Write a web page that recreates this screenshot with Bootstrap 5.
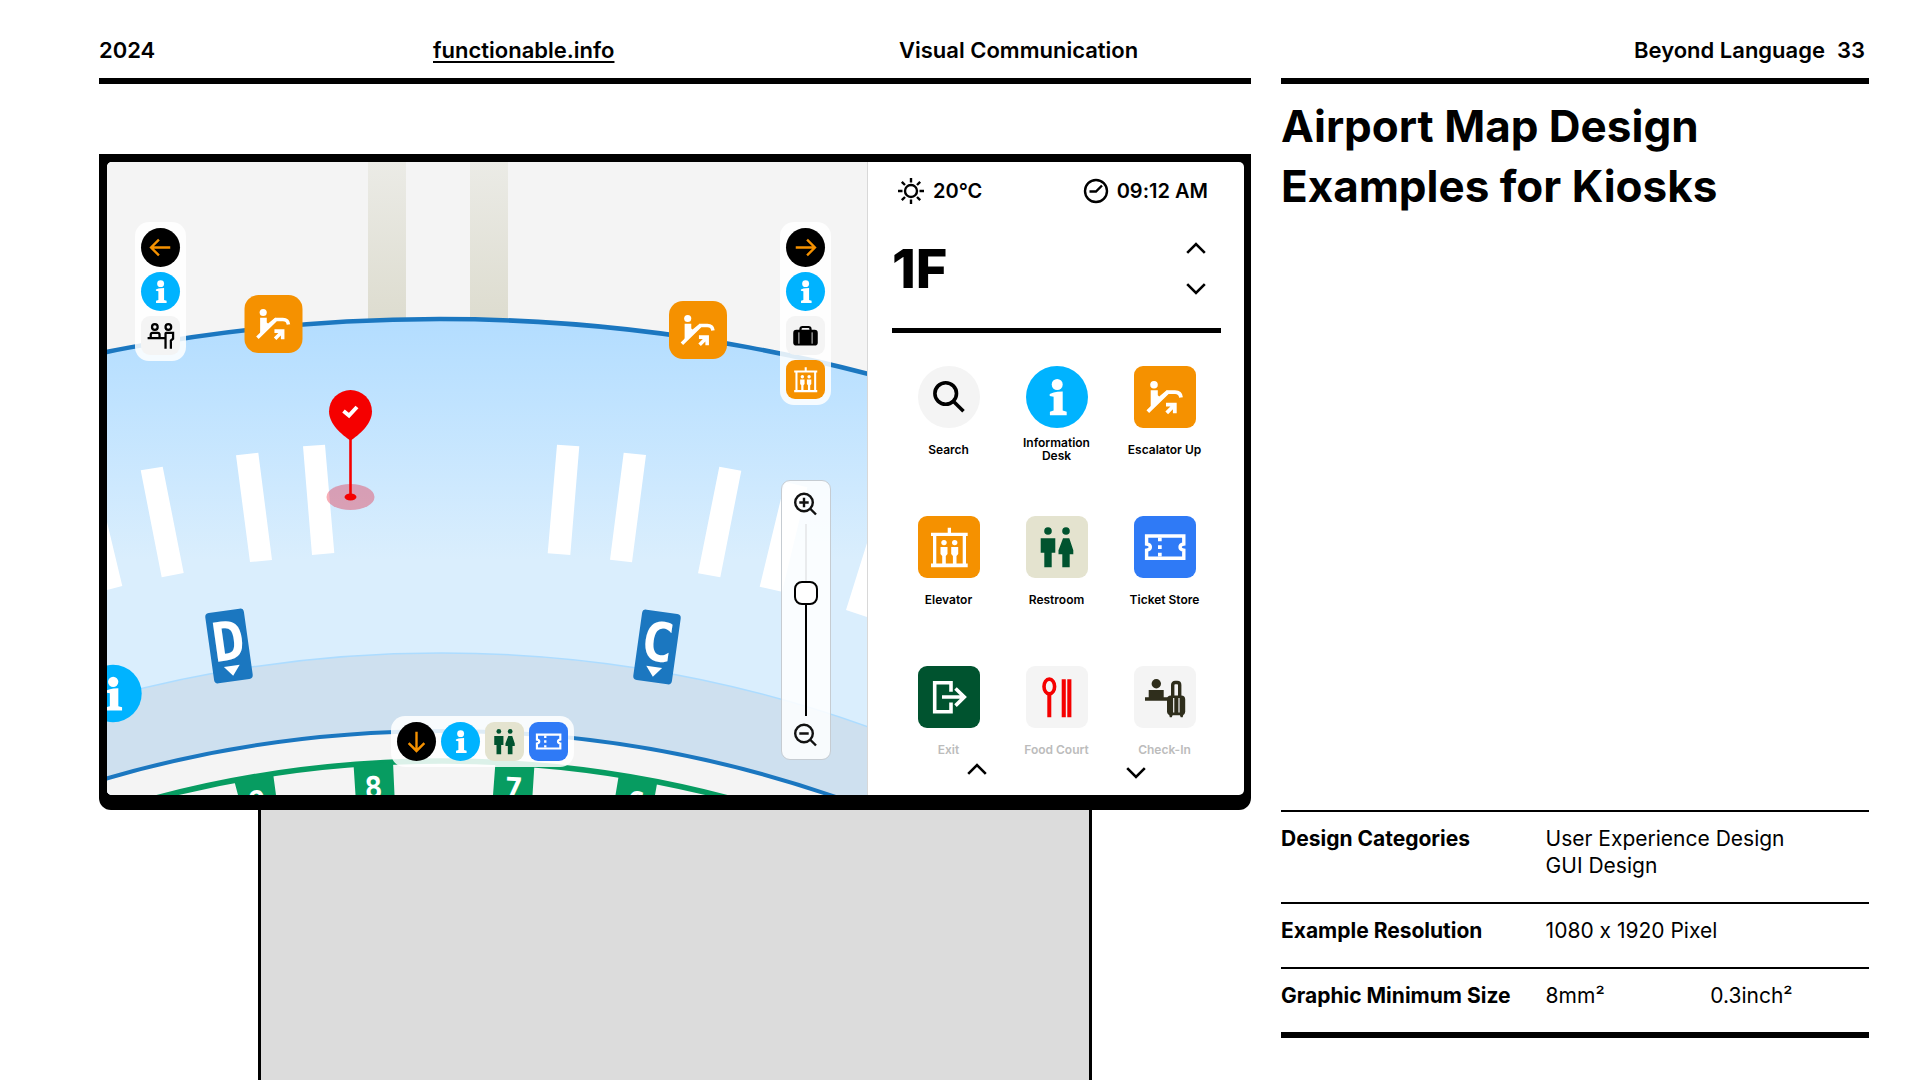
<!DOCTYPE html>
<html lang="en">
<head>
<meta charset="utf-8">
<meta name="viewport" content="width=device-width, initial-scale=1">
<title>Airport Map Design Examples for Kiosks</title>
<link href="https://cdn.jsdelivr.net/npm/bootstrap@5.3.0/dist/css/bootstrap.min.css" rel="stylesheet">
<style>
  body { font-family: Inter, "Noto Sans", sans-serif; font-variant-ligatures: no-contextual; color: #000; background: #fff; }
  .sheet { padding-left: 99px; padding-right: 51px; gap: 30px; }
  .sheet-main { flex: 1152 1 0; min-width: 0; }
  .sheet-side { flex: 588 1 0; min-width: 0; padding-bottom: 42px; }
  .strip { height: 84px; border-bottom: 6px solid #000; padding-top: 22px; font-size: 22px; font-weight: 600; line-height: 28px; }
  .strip-main { display: grid; grid-template-columns: 334fr 466fr 352fr; align-items: center; }
  .strip-side { gap: 12px; padding-right: 4px; }
  .strip a { color: #000; text-underline-offset: 3px; text-decoration-thickness: 2px; text-decoration-skip-ink: none; }
  .headline { font-size: 44px; line-height: 60px; font-weight: 700; margin-top: 12px; }

  .kiosk { margin-top: 70px; background: #000; padding: 8px 7px 15px 8px; border-radius: 0 0 12px 12px; }
  .screen { border-radius: 5px; overflow: hidden; background: #fff; }
  .stand { width: 834px; max-width: 100%; margin-left: 159px; background: #dcdcdc; border: solid #000; border-width: 0 3px; }
  .map-pane { flex: 1 1 0; min-width: 0; border-right: 1px solid #d8d8d8; background: #f4f4f4; }
  .panel { width: 376px; padding: 14px 23px 0 24px; }

  .dock { background: rgba(255,255,255,.86); border-radius: 14px; padding: 6px; gap: 5px; }
  .dock-left { left: 28px; top: 60px; }
  .dock-right { right: 36px; top: 60px; }
  .dock-bottom { left: 284px; bottom: 28px; }
  .zoomer { right: 36px; bottom: 35px; width: 50px; height: 280px; background: rgba(255,255,255,.86); border: 1px solid #c6ccd2; border-radius: 9px; padding: 11px 0 12px; }
  .plain { background: none; border: 0; padding: 0; color: inherit; line-height: 0; }
  .glyph { width: 62px; height: 62px; border-radius: 9px; flex: none; }
  .dock .glyph { width: 39px; height: 39px; border-radius: 9px; }
  .glyph.disc, .dock .glyph.disc { border-radius: 50%; }
  .bg-info-sky { background: #00b3ff; color: #fff; }
  .bg-amber { background: #f59100; color: #fff; }
  .bg-sand { background: #e4e3cf; color: #00532f; }
  .bg-azure { background: #2f7af6; color: #fff; }
  .bg-forest { background: #00532f; color: #fff; }
  .bg-fog { background: #f4f4f4; color: #000; }
  .bg-ink { background: #000; color: #f59100; }
  .ink-red { color: #f50000; }
  .ink-olive { color: #2f2e1c; }

  .track-box { width: 24px; height: 192px; position: relative; }
  .track-box input { position: absolute; left: -84px; top: 84px; width: 192px; height: 24px; margin: 0; transform: rotate(-90deg); appearance: none; -webkit-appearance: none; background: none; }
  .track-box input::-webkit-slider-runnable-track { height: 2px; background: linear-gradient(90deg, #000 64%, #e9ebed 64%); }
  .track-box input::-webkit-slider-thumb { -webkit-appearance: none; width: 24px; height: 24px; margin-top: -11px; border: 2px solid #000; border-radius: 8px; background: #fff; }

  .status { font-size: 20px; font-weight: 600; line-height: 30px; padding: 0 13px 0 5px; }
  .floor { height: 127px; border-bottom: 5px solid #000; padding-top: 3px; }
  .floor-name { font-size: 54px; line-height: 60px; font-weight: 800; }
  .floor-keys { gap: 29px; padding-right: 15px; }
  .places { display: grid; grid-template-columns: repeat(3, 108px); justify-content: center; row-gap: 53px; margin-top: 33px; }
  .place-label { height: 28px; margin-top: 7px; font-size: 12px; line-height: 13px; font-weight: 600; }
  .place-dim { color: #bcbcbc; }
  .pager { height: 32px; padding: 0 75px 0 75px; }

  .facts { width: 100%; font-size: 21px; line-height: 27px; border-bottom: 6px solid #000; table-layout: fixed; }
  .facts th, .facts td { border-top: 2px solid #000; vertical-align: top; padding: 13px 0 23px; }
  .facts th { font-weight: 700; letter-spacing: normal; white-space: nowrap; }
  .col-name { width: 45%; }
  .col-metric { width: 28%; }
</style>
</head>
<body>
<svg class="d-none" aria-hidden="true">
  <symbol id="i-info" viewBox="0 0 62 62"><circle cx="31.2" cy="18.5" r="5.5" fill="currentColor"/><path fill="currentColor" d="M23.7 28l4-1.6q3-.9 9-.9v19l4 1.2v3.6H23.9v-3.6l3.7-1.2V30.8l-3.9-.8z"/></symbol>
  <symbol id="i-esc" viewBox="0 0 62 62"><circle cx="20" cy="18.7" r="3.8" fill="currentColor"/><path fill="currentColor" d="M16.7 24.3h7.1v5l1.4 1.2L33 24l1.500 3-14 14-3.800 2z"/><path fill="none" stroke="currentColor" stroke-width="3.8" d="M13.8 45.6L33.8 26.2H41q5.5 0 6 5.3M32 38.6h8.8v8.6M41 38.5l-8.3 8.3"/></symbol>
  <symbol id="i-lift" viewBox="0 0 62 62"><path fill="currentColor" d="M29.7 11.7H33v5h16.7V20H48v27.5h1.7v3.8H13v-3.8h2V20h-2v-3.3h16.7zM18.3 20v27.5h26.4V20z" fill-rule="evenodd"/><g fill="currentColor"><circle cx="26" cy="26.6" r="2.7"/><circle cx="36.7" cy="26.6" r="2.7"/><path d="M22.5 31h7v7l-1.7 2v8h-3.6v-8l-1.7-2zM33.2 31h7v7l-1.7 2v8h-3.6v-8l-1.7-2z"/></g></symbol>
  <symbol id="i-wc" viewBox="0 0 62 62"><g fill="currentColor"><circle cx="22" cy="15" r="3.8"/><circle cx="40" cy="15" r="3.8"/><path d="M14.7 22.3h14.6v14.4h-3.6v14.6h-7.4V36.7h-3.6zM37 22.3h6.3l4 12v4h-3.6v13h-7.4v-13h-3.8v-4z"/></g></symbol>
  <symbol id="i-ticket" viewBox="0 0 62 62"><path fill="none" stroke="currentColor" stroke-width="3.4" d="M12.6 20h37.2v8c-5 .5-5 5.700 0 6.200v8H12.600v-8c5-.5 5-5.700 0-6.200z"/><path fill="currentColor" d="M24 21.500h3.700v3.800H24zM24 29.200h3.700v3.700H24zM24 36.800h3.700v3.700H24z"/></symbol>
  <symbol id="i-exit" viewBox="0 0 62 62"><path fill="none" stroke="currentColor" stroke-width="3.600" d="M33 25.700V16.700H16.700v29H33v-9.300M24 31h22.500M37.500 22.500L46.300 31l-8.800 8.600"/></symbol>
  <symbol id="i-food" viewBox="0 0 62 62"><ellipse cx="23.300" cy="20.500" rx="5.300" ry="7.400" fill="none" stroke="currentColor" stroke-width="3.600"/><path fill="currentColor" d="M21.300 28h4v23.200h-4zM35.700 13.300h4.100v37.900h-4.100zM41.300 13.300h4.100v37.900h-4.100z"/></symbol>
  <symbol id="i-check" viewBox="0 0 62 62"><g fill="currentColor"><circle cx="22.300" cy="17.700" r="4.700"/><path d="M14.700 24h15v7.300H34v3.500H11v-3.500h3.700z"/><rect x="33" y="29.500" width="18.200" height="19.800" rx="4"/><path d="M35 48h4l-1.200 3.300h-2zM45.500 48h4l-.8 3.300h-2z"/></g><path fill="none" stroke="currentColor" stroke-width="3.400" d="M38.700 31V19q0-2.500 2.500-2.500h2q2.500 0 2.500 2.500v12"/><path stroke="#f4f4f4" stroke-width="1.200" d="M39.700 32v14.500M45 32v14.500"/></symbol>
  <symbol id="i-search" viewBox="0 0 62 62"><g fill="none" stroke="currentColor" stroke-width="3.600"><circle cx="27.700" cy="27.500" r="10.800"/><path d="M35.300 35.200L45.500 45.200"/></g></symbol>
  <symbol id="i-desk" viewBox="0 0 62 62"><g fill="none" stroke="currentColor" stroke-width="3.600"><circle cx="22" cy="17.500" r="4.500"/><circle cx="43.500" cy="17.500" r="4.500"/><path d="M15.500 34v-4q0-3 3-3h8q3 0 3 3v4M10.500 35h28.500M39 52V28q0-1 1-1h11v9l-3.500 3v13"/></g></symbol>
  <symbol id="i-bag" viewBox="0 0 62 62"><rect x="11.500" y="22" width="39" height="25" rx="5" fill="currentColor"/><path fill="none" stroke="currentColor" stroke-width="3.500" d="M23 23v-2q0-3.500 3.500-3.500h9q3.500 0 3.500 3.500v2"/><path stroke="#f4f4f4" stroke-width="1.400" d="M20.500 26v18M41.500 26v18"/></symbol>
  <symbol id="i-arrow" viewBox="0 0 62 62"><path fill="none" stroke="currentColor" stroke-width="3.800" d="M15.500 31h30M33.500 18.500L46 31 33.500 43.500"/></symbol>
  <symbol id="i-arrow-l" viewBox="0 0 62 62"><use href="#i-arrow" transform="rotate(180 31 31)" width="62" height="62"/></symbol>
  <symbol id="i-arrow-d" viewBox="0 0 62 62"><use href="#i-arrow" transform="rotate(90 31 31)" width="62" height="62"/></symbol>
  <symbol id="i-up" viewBox="0 0 20 12"><path fill="none" stroke="currentColor" stroke-width="2.600" d="M1.200 10.800L10 2l8.800 8.800"/></symbol>
  <symbol id="i-down" viewBox="0 0 20 12"><path fill="none" stroke="currentColor" stroke-width="2.600" d="M1.200 1.200L10 10l8.800-8.800"/></symbol>
</svg>

<div class="sheet d-flex min-vh-100">
  <main class="sheet-main d-flex flex-column">
    <header class="strip strip-main">
      <span>2024</span>
      <span><a href="#">functionable.info</a></span>
      <span>Visual Communication</span>
    </header>

    <section class="kiosk">
      <div class="screen d-flex">
        <div class="map-pane position-relative overflow-hidden">
          <svg class="position-absolute top-0 start-0 w-100 h-100" viewBox="107 162 760 633" preserveAspectRatio="xMidYMid slice" role="img" aria-label="Terminal map, first floor">
            <defs>
              <linearGradient id="g-sky" gradientUnits="userSpaceOnUse" x1="0" y1="320" x2="0" y2="560"><stop offset="0" stop-color="#b3ddff"/><stop offset=".35" stop-color="#c0e3ff"/><stop offset="1" stop-color="#daeefd"/></linearGradient>
              <linearGradient id="g-pier" x1="0" y1="0" x2="0" y2="1"><stop offset="0" stop-color="#ebebe6"/><stop offset="1" stop-color="#dddccf"/></linearGradient>
            </defs>
            <rect x="107" y="162" width="760" height="633" fill="#f4f4f4"/>
            <path fill="url(#g-pier)" d="M368 162h38v160h-38zM470 162h38v160h-38z"/>
            <circle cx="439.500" cy="2019" r="1700" fill="url(#g-sky)" stroke="#1b77c0" stroke-width="4.500"/>
            <circle cx="441" cy="1925" r="1272" fill="#cee0ef" stroke="#addcff" stroke-width="1.500"/>
            <path fill="#fff" d="M107 522L122.300 586 107 590zM140.700 470.300L162.700 466.700 183.700 573 161.700 577.300zM236 455.300L258.300 452.700 272 560 250 562zM303 446.300L325 444.700 334.300 553 312 555zM557 444.700L579.300 446.300 570.300 555 547.700 553.300zM623.700 452.700L646 455 632 562.300 610 559.700zM719.300 466.700L741.300 470.700 720.300 577.300 698 573.300zM785 482L807.300 487.300 782 591.700 759.700 586.700zM867 543L846 610 867 617z"/>
            <circle cx="442" cy="1938" r="1207" fill="#f4f4f4" stroke="#1b77c0" stroke-width="4"/>
            <circle cx="442" cy="1882" r="1121" fill="none" stroke="#079c61" stroke-width="5.500"/>
            <path fill="#079c61" d="M234 780L273 773 276 795H238zM353.500 764L393 762 394.500 795H355.500zM495.500 762L534.500 764 532.500 795H493zM619 774L657.500 781 655 795H615.500z"/>
            <g fill="#fff" font-family="'DejaVu Sans Mono', monospace" font-weight="700" font-size="30" text-anchor="middle">
              <text x="259" y="812" transform="rotate(-8 259 812)">9</text>
              <text x="374" y="798" transform="rotate(-3 374 798)">8</text>
              <text x="513" y="799" transform="rotate(3 513 799)">7</text>
              <text x="634" y="813" transform="rotate(8 634 813)">6</text>
            </g>
            <g transform="translate(229 646) rotate(-8)">
              <rect x="-19.500" y="-35.500" width="39" height="71" rx="4" fill="#1b77c0"/>
              <text x="0" y="14" text-anchor="middle" fill="#fff" font-family="'DejaVu Sans Mono', monospace" font-weight="700" font-size="54">D</text>
              <path fill="#fff" d="M-8 20H8L0 30z"/>
            </g>
            <g transform="translate(657 647) rotate(8)">
              <rect x="-19.500" y="-35.500" width="39" height="71" rx="4" fill="#1b77c0"/>
              <text x="0" y="14" text-anchor="middle" fill="#fff" font-family="'DejaVu Sans Mono', monospace" font-weight="700" font-size="54">C</text>
              <path fill="#fff" d="M-8 20H8L0 30z"/>
            </g>
            <circle cx="113" cy="693.500" r="28.700" fill="#00b3ff"/>
            <use href="#i-info" x="84" y="664.500" width="58" height="58" color="#fff"/>
            <rect x="244.500" y="295" width="58" height="58" rx="14" fill="#f59100"/>
            <use href="#i-esc" x="244.500" y="295" width="58" height="58" color="#fff"/>
            <rect x="669" y="301" width="58" height="58" rx="14" fill="#f59100"/>
            <use href="#i-esc" x="669" y="301" width="58" height="58" color="#fff"/>
            <ellipse cx="350.500" cy="497" rx="24" ry="13" fill="#e8001c" fill-opacity=".32"/>
            <ellipse cx="350.500" cy="497" rx="6" ry="3.500" fill="#f50000"/>
            <path stroke="#f50000" stroke-width="2.600" d="M350.500 438v59"/>
            <path fill="#f50000" d="M350.500 440.500C342 435 329 424 329 411.500a21.500 21.500 0 0 1 43 0C372 424 359 435 350.500 440.500z"/>
            <path fill="none" stroke="#fff" stroke-width="4" d="M343.500 411l5.500 4.500 8-8.500"/>
          </svg>

          <nav class="dock dock-left position-absolute d-flex flex-column" aria-label="To the left">
            <button class="plain" type="button" aria-label="Go left"><svg class="glyph disc bg-ink"><use href="#i-arrow-l"/></svg></button>
            <button class="plain" type="button" aria-label="Information desk"><svg class="glyph disc bg-info-sky"><use href="#i-info"/></svg></button>
            <button class="plain" type="button" aria-label="Service counter"><svg class="glyph bg-fog"><use href="#i-desk"/></svg></button>
          </nav>
          <nav class="dock dock-right position-absolute d-flex flex-column" aria-label="To the right">
            <button class="plain" type="button" aria-label="Go right"><svg class="glyph disc bg-ink"><use href="#i-arrow"/></svg></button>
            <button class="plain" type="button" aria-label="Information desk"><svg class="glyph disc bg-info-sky"><use href="#i-info"/></svg></button>
            <button class="plain" type="button" aria-label="Baggage"><svg class="glyph bg-fog"><use href="#i-bag"/></svg></button>
            <button class="plain" type="button" aria-label="Elevator"><svg class="glyph bg-amber"><use href="#i-lift"/></svg></button>
          </nav>
          <nav class="dock dock-bottom position-absolute d-flex" aria-label="Below">
            <button class="plain" type="button" aria-label="Go down"><svg class="glyph disc bg-ink"><use href="#i-arrow-d"/></svg></button>
            <button class="plain" type="button" aria-label="Information desk"><svg class="glyph disc bg-info-sky"><use href="#i-info"/></svg></button>
            <button class="plain" type="button" aria-label="Restroom"><svg class="glyph bg-sand"><use href="#i-wc"/></svg></button>
            <button class="plain" type="button" aria-label="Ticket store"><svg class="glyph bg-azure"><use href="#i-ticket"/></svg></button>
          </nav>
          <div class="zoomer position-absolute d-flex flex-column align-items-center justify-content-between">
            <button class="plain" type="button" aria-label="Zoom in"><svg width="24" height="24" viewBox="0 0 24 24" fill="none" stroke="#111" stroke-width="2.400"><circle cx="10" cy="10.500" r="8.800"/><path d="M16.500 17l5.500 5.500M10 5.800v9.400M5.300 10.500h9.400"/></svg></button>
            <div class="track-box"><input type="range" min="0" max="100" value="66" aria-label="Zoom level"></div>
            <button class="plain" type="button" aria-label="Zoom out"><svg width="24" height="24" viewBox="0 0 24 24" fill="none" stroke="#111" stroke-width="2.400"><circle cx="10" cy="10.500" r="8.800"/><path d="M16.500 17l5.500 5.500M5.300 10.500h9.400"/></svg></button>
          </div>
        </div>

        <aside class="panel flex-shrink-0">
          <div class="status d-flex justify-content-between">
            <span class="d-flex align-items-center gap-2"><svg width="28" height="28" viewBox="0 0 28 28" fill="none" stroke="#000" stroke-width="2.400"><circle cx="14" cy="14" r="6"/><path d="M14 1v4.500M14 22.500V27M1 14h4.500M22.500 14H27M4.800 4.800l3.200 3.200M20 20l3.200 3.200M4.800 23.200L8 20M20 8l3.200-3.200"/></svg>20°C</span>
            <span class="d-flex align-items-center gap-2"><svg width="26" height="26" viewBox="0 0 26 26" fill="none" stroke="#000" stroke-width="2.400"><circle cx="13" cy="13" r="11"/><path d="M6.500 13.500H13l6-6"/></svg>09:12 AM</span>
          </div>
          <div class="floor d-flex justify-content-between align-items-center">
            <div class="floor-name">1F</div>
            <div class="floor-keys d-flex flex-column">
              <button class="plain" type="button" aria-label="Floor up"><svg width="20" height="12"><use href="#i-up"/></svg></button>
              <button class="plain" type="button" aria-label="Floor down"><svg width="20" height="12"><use href="#i-down"/></svg></button>
            </div>
          </div>
          <div class="places">
            <button class="plain d-flex flex-column align-items-center" type="button"><svg class="glyph disc bg-fog"><use href="#i-search"/></svg><span class="place-label d-flex align-items-center">Search</span></button>
            <button class="plain d-flex flex-column align-items-center" type="button"><svg class="glyph disc bg-info-sky"><use href="#i-info"/></svg><span class="place-label d-flex align-items-center">Information<br>Desk</span></button>
            <button class="plain d-flex flex-column align-items-center" type="button"><svg class="glyph bg-amber"><use href="#i-esc"/></svg><span class="place-label d-flex align-items-center">Escalator Up</span></button>
            <button class="plain d-flex flex-column align-items-center" type="button"><svg class="glyph bg-amber"><use href="#i-lift"/></svg><span class="place-label d-flex align-items-center">Elevator</span></button>
            <button class="plain d-flex flex-column align-items-center" type="button"><svg class="glyph bg-sand"><use href="#i-wc"/></svg><span class="place-label d-flex align-items-center">Restroom</span></button>
            <button class="plain d-flex flex-column align-items-center" type="button"><svg class="glyph bg-azure"><use href="#i-ticket"/></svg><span class="place-label d-flex align-items-center">Ticket Store</span></button>
            <button class="plain d-flex flex-column align-items-center" type="button"><svg class="glyph bg-forest"><use href="#i-exit"/></svg><span class="place-label place-dim d-flex align-items-center">Exit</span></button>
            <button class="plain d-flex flex-column align-items-center" type="button"><svg class="glyph bg-fog ink-red"><use href="#i-food"/></svg><span class="place-label place-dim d-flex align-items-center">Food Court</span></button>
            <button class="plain d-flex flex-column align-items-center" type="button"><svg class="glyph bg-fog ink-olive"><use href="#i-check"/></svg><span class="place-label place-dim d-flex align-items-center">Check-In</span></button>
          </div>
          <div class="pager d-flex justify-content-between align-items-start">
            <button class="plain" type="button" aria-label="Previous places"><svg width="20" height="12"><use href="#i-up"/></svg></button>
            <button class="plain pt-1" type="button" aria-label="More places"><svg width="20" height="12"><use href="#i-down"/></svg></button>
          </div>
        </aside>
      </div>
    </section>
    <div class="stand flex-grow-1"></div>
  </main>

  <section class="sheet-side d-flex flex-column">
    <header class="strip strip-side d-flex justify-content-end align-items-center">
      <span>Beyond Language</span><span>33</span>
    </header>
    <h1 class="headline">Airport Map Design<br>Examples for Kiosks</h1>
    <table class="facts mt-auto">
      <colgroup><col class="col-name"><col class="col-metric"><col></colgroup>
      <tbody>
        <tr><th scope="row">Design Categories</th><td colspan="2">User Experience Design<br>GUI Design</td></tr>
        <tr><th scope="row">Example Resolution</th><td colspan="2">1080 x 1920 Pixel</td></tr>
        <tr><th scope="row">Graphic Minimum Size</th><td>8mm²</td><td>0.3inch²</td></tr>
      </tbody>
    </table>
  </section>
</div>
<script src="https://cdn.jsdelivr.net/npm/bootstrap@5.3.0/dist/js/bootstrap.bundle.min.js"></script>
</body>
</html>
